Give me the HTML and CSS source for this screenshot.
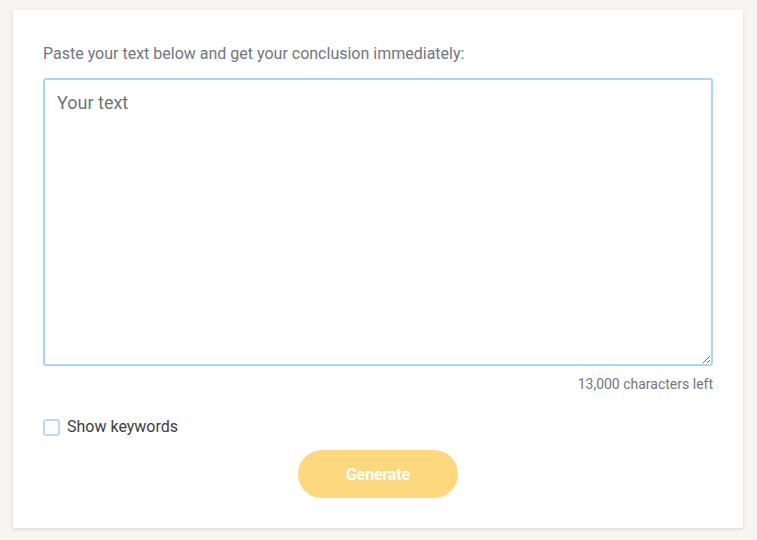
FILE: index.html
```html
<!DOCTYPE html>
<html>
<head>
<meta charset="utf-8">
<link rel="stylesheet" href="styles.css">
</head>
<body>
<div class="card">
  <label class="intro" for="txt">Paste your text below and get your conclusion immediately:</label>
  <textarea id="txt" class="field" placeholder="Your text"></textarea>
  <div class="counter">13,000 characters left</div>
  <label class="check"><span class="box"></span><span>Show keywords</span></label>
  <div class="actions"><button class="btn">Generate</button></div>
</div>
</body>
</html>
```
FILE: styles.css
```css
html, body { margin: 0; padding: 0; }
body {
  background: #f6f5f2;
  font-family: Roboto, "Liberation Sans", sans-serif;
  padding: 10px 14px 12px 13px;
  box-sizing: border-box;
  width: 757px;
  height: 540px;
}
.card {
  background: #fff;
  width: 730px;
  height: 518px;
  box-sizing: border-box;
  padding: 34px 30px 0 30px;
  box-shadow: 0 1px 4px rgba(0,0,0,0.13);
  display: flex;
  flex-direction: column;
}
.intro {
  font-size: 16px;
  color: #6f7780;
  line-height: 20px;
  display: block;
}
.field {
  margin-top: 14px;
  width: 670px;
  height: 288px;
  box-sizing: border-box;
  border: 2px solid #abd6f0;
  border-radius: 3px;
  padding: 11px 12px;
  font-family: Roboto, "Liberation Sans", sans-serif;
  font-size: 18px;
  line-height: 24px;
  color: #333;
  resize: vertical;
  outline: none;
}
.field::placeholder { color: #6c757d; opacity: 1; }
.counter {
  margin-top: 9px;
  text-align: right;
  font-size: 14px;
  color: #6f7780;
  line-height: 18px;
}
.check {
  margin-top: 24px;
  display: flex;
  align-items: center;
  gap: 7px;
  font-size: 16px;
  color: #3d3d3d;
  line-height: 20px;
}
.box {
  width: 13px;
  height: 13px;
  border: 2px solid #b7dbf0;
  border-radius: 3px;
  flex: none;
}
.actions {
  margin-top: 13px;
  display: flex;
  justify-content: center;
}
.btn {
  width: 160px;
  height: 48px;
  border: none;
  border-radius: 24px;
  background: #fdd87e;
  color: #fff;
  font-family: Roboto, "Liberation Sans", sans-serif;
  font-weight: 700;
  font-size: 16px;
  letter-spacing: -0.2px;
}
```
